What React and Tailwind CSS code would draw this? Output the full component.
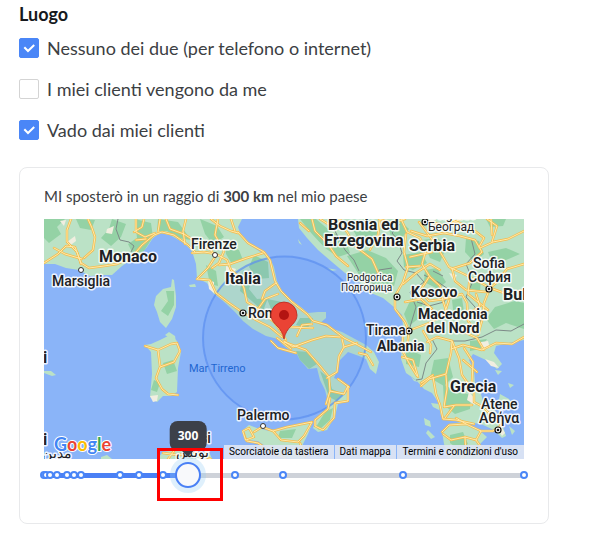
import React, { useState } from "react";

const stops = [0, 5, 12, 27, 48, 63, 77, 158, 198, 248, 398, 498, 748, 1000];

const land = [
  // France, Italy
  "M44 219 L242 219 L238 227 L241 236 L248 244 L259 251 L270 258 L274 267 L277 281 L283 293 L291 300 L301 307 L308 313 L318 312 L326 312 L326 318 L319 324 L330 328 L342 332 L355 339 L366 345 L374 352 L379 362 L376 374 L370 369 L366 359 L359 356 L348 352 L343 357 L338 362 L337 371 L334 378 L341 381 L349 388 L348 401 L338 404 L335 416 L327 430 L318 432 L313 428 L316 421 L325 411 L328 402 L325 390 L320 380 L317 368 L308 369 L300 360 L296 352 L288 349 L283 345 L278 339 L266 336 L253 329 L243 321 L235 312 L223 301 L213 293 L207 283 L197 278 L196 264 L192 251 L184 243 L170 235 L160 233 L153 238 L147 247 L139 256 L129 261 L122 266 L112 275 L104 275 L90 276 L79 270 L66 268 L55 264 L44 264 Z",
  // Balkans, Greece
  "M298 219 L524 219 L524 340 L509 343 L496 346 L494 353 L502 364 L497 369 L486 360 L473 354 L469 360 L474 370 L475 383 L481 394 L484 405 L494 409 L500 418 L506 436 L502 438 L494 430 L481 424 L467 422 L450 420 L441 416 L438 402 L432 393 L424 389 L416 380 L406 373 L401 359 L402 345 L403 326 L402 315 L394 307 L383 298 L371 293 L360 283 L345 273 L332 262 L318 250 L307 238 L299 228 Z",
  // Peloponnese
  "M442 431 L449 424 L463 422 L479 430 L487 437 L480 444 L484 453 L478 459 L448 459 L444 444 Z",
  // Corsica
  "M172 279 L174 280 L176 296 L176 307 L172 319 L166 328 L160 322 L157 312 L154 305 L156 296 L163 289 L171 287 Z",
  // Sardinia
  "M170 335 L177 341 L181 352 L178 368 L177 392 L171 396 L163 396 L157 402 L150 397 L152 374 L151 352 L145 345 L151 344 L160 340 Z",
  "M165 335 L169 332 L175 336 L176 342 L171 339 Z",
  // Sicily
  "M242 431 L249 425 L257 428 L269 431 L285 427 L313 421 L308 434 L302 446 L304 459 L288 458 L272 451 L258 441 L245 440 Z",
  // Tunisia
  "M157 459 L163 452 L174 450 L189 452 L201 454 L208 449 L212 459 Z",
  "M44 371 L51 371 L56 375 L52 376 L44 373 Z",
  "M101 457 L107 455 L112 459 L101 459 Z",
  // Aegean and Ionian islands
  "M500 394 L509 399 L516 409 L508 407 L499 400 Z",
  "M431 403 L439 404 L439 410 L433 407 Z",
  "M424 418 L430 421 L431 427 L425 425 Z",
  "M428 430 L435 437 L431 439 L426 433 Z",
  "M411 377 L418 382 L414 381 Z",
  "M495 370 L502 371 L498 375 Z",
  "M508 383 L514 385 L510 388 Z",
  "M509 426 L515 431 L512 435 Z",
  "M514 448 L521 450 L518 454 Z",
  "M189 285 L195 284 L196 287 L190 287 Z",
  "M298 239 L302 245 L299 243 Z",
  "M327 268 L337 270 L331 271 Z",
];

const forest = [
  "M44 219 L65 219 L57 227 L61 234 L49 243 L44 238 Z",
  "M76 219 L95 220 L91 230 L80 228 Z",
  "M112 219 L126 224 L121 237 L111 246 L101 238 L109 229 Z",
  "M135 219 L151 223 L153 237 L144 251 L133 254 L128 244 L137 238 Z",
  "M158 219 L178 222 L191 240 L178 238 L167 231 L157 231 Z",
  "M200 219 L217 226 L224 237 L213 244 L205 234 Z",
  "M225 244 L239 250 L243 260 L232 264 L226 254 Z",
  "M254 255 L268 262 L269 278 L257 279 L249 267 Z",
  "M243 270 L252 280 L249 289 L257 299 L268 298 L263 311 L253 302 L240 291 Z",
  "M206 265 L216 271 L218 286 L210 284 Z",
  "M267 299 L282 302 L292 311 L285 317 L272 311 Z",
  "M300 318 L313 318 L308 328 L296 325 Z",
  "M296 351 L308 352 L317 364 L309 369 L300 360 Z",
  "M320 371 L329 378 L332 389 L343 394 L337 401 L329 397 Z",
  "M325 412 L333 408 L330 420 L319 430 L316 427 Z",
  "M280 431 L296 429 L292 438 L278 438 Z",
  "M166 291 L174 291 L174 305 L168 316 L161 311 L168 301 Z",
  "M163 363 L173 360 L177 371 L167 374 Z",
  "M154 380 L160 383 L157 392 L151 390 Z",
  "M300 219 L316 219 L329 230 L345 239 L350 253 L338 257 L325 248 L312 234 Z",
  "M350 224 L370 220 L379 231 L370 244 L358 239 Z",
  "M347 256 L367 250 L386 258 L398 271 L394 286 L379 289 L362 279 Z",
  "M388 225 L398 219 L409 229 L401 239 L391 237 Z",
  "M403 255 L421 252 L427 263 L413 270 L404 267 Z",
  "M425 270 L437 268 L446 282 L438 289 L424 282 Z",
  "M410 301 L423 302 L419 318 L409 326 L404 314 Z",
  "M466 238 L479 241 L484 254 L474 262 L465 252 Z",
  "M486 219 L506 219 L503 226 L490 227 Z",
  "M495 307 L515 301 L524 303 L524 329 L506 323 L494 329 L486 319 Z",
  "M470 276 L481 279 L480 291 L468 288 Z",
  "M406 348 L421 355 L419 367 L406 364 Z",
  "M434 360 L448 358 L453 377 L444 386 L430 378 Z",
  "M443 384 L455 391 L471 395 L470 409 L455 414 L444 405 Z",
  "M450 435 L463 432 L468 444 L458 449 L450 443 Z",
  "M470 341 L487 339 L480 349 L470 351 Z",
  "M422 240 L438 238 L446 248 L440 262 L430 258 Z",
  "M452 300 L462 298 L464 312 L454 318 Z",
  "M488 252 L506 248 L520 254 L506 260 L492 262 Z",
];

const pale = [
  "M67 242 L75 236 L76 241 L68 247 Z",
  "M107 229 L114 226 L112 234 L106 233 Z",
  "M60 221 L66 220 L64 226 Z",
  "M226 266 L236 269 L232 277 L226 274 Z",
  "M208 280 L214 282 L214 293 L209 289 Z",
  "M150 396 L158 395 L157 401 L153 402 Z",
  "M449 273 L457 275 L454 281 Z",
  "M481 342 L488 341 L490 348 L481 349 Z",
  "M485 359 L494 362 L499 368 L491 366 Z",
  "M500 424 L505 433 L502 436 L497 428 Z",
  "M469 392 L475 399 L475 405 L467 400 Z",
  "M450 449 L455 453 L450 458 Z",
];

const roads = [
  "M44 263 L58 254 L66 246 L75 247 L81 263 L89 268 L104 266 L117 264 L131 258 L142 245 L154 235 L162 232 L174 235 L188 245 L195 252",
  "M71 219 L67 230 L67 242 L77 252 L81 264",
  "M88 219 L92 228 L95 237 L93 250 L84 258",
  "M54 248 L65 254 L82 259",
  "M136 219 L136 232 L145 237 L155 233 M160 219 L158 232 M144 219 L142 227 L134 232 M136 240 L146 239",
  "M166 219 L170 229 L184 234 L199 244 L211 250 L215 257 L208 268 L197 279",
  "M186 219 L183 231 L185 244",
  "M211 219 L220 226 L231 231 L238 233 M231 219 L235 231",
  "M218 219 L215 235 L224 251 L219 263 L212 268",
  "M192 253 L204 252 L216 254 L227 260 L231 270 L239 277 L244 288 L247 302 L260 310 L274 322 L282 333 L286 340",
  "M197 279 L210 280 L216 293 L229 303 L242 312 L258 321 L270 327 L282 337",
  "M238 232 L248 243 L264 252 L270 260 L275 281 L281 291 L292 302 L307 314 L313 321 L327 325 L344 338 L358 345 L371 352",
  "M219 265 L230 264 L247 258 L263 253",
  "M258 309 L265 299 L278 294 M276 283 L265 291 L262 299",
  "M284 341 L293 347 L312 340 L326 336 L340 337 M297 336 L302 325 L312 324 M290 327 L313 328",
  "M284 342 L306 350 L320 366 L329 377 L330 391 L326 404",
  "M327 378 L337 372 L339 356 L344 347 L357 343 M330 391 L344 394 L348 386 L348 401 L335 403 L334 418 L323 430 L315 426 L315 420 L328 409 L330 398",
  "M338 379 L349 387 M342 339 L344 347 M359 353 L367 355 L373 365",
  "M271 341 L278 348 L296 353 M277 338 L291 349",
  "M243 431 L249 428 L254 437 L246 440 Z M254 432 L262 427 L273 431 L287 427 L312 422 L304 436 L298 442 L281 440 L273 431",
  "M247 441 L258 443 L273 453 L285 458 M300 443 L305 457",
  "M145 346 L158 350 L171 344 L177 343 L180 351 L174 362 L160 367 L156 378 L162 389 L168 394 M158 350 L160 366 M168 394 L178 395",
  "M163 453 L178 455 L197 453 L211 459 M168 459 L174 451",
  "M312 219 L315 231 L328 244 L336 256 L348 266",
  "M320 219 L328 224 L341 219 M300 223 L309 231 M338 219 L347 232 L356 247 L372 259 L380 277",
  "M379 219 L392 223 L405 219 M380 220 L378 235 L370 250 M401 219 L407 232 L420 238 L426 250 L422 264 L430 277 L440 286",
  "M419 222 L431 238 L439 250 L449 267 L464 274 L481 283 L490 288",
  "M406 234 L404 252 L408 267 L403 282 L395 296 L395 309 L405 322 L409 331 L407 348",
  "M411 231 L427 236 L444 233 L460 236 L475 240 L482 252 L470 263 L451 269",
  "M424 220 L445 226 L461 219 M449 219 L470 227 L484 238 L479 247 M480 248 L493 242 L508 239 L524 231 M492 242 L497 226 L487 219",
  "M491 219 L492 235 M524 264 L507 269 L496 283 L490 288 L484 303 L483 317 L478 335 M490 288 L507 294 L524 290",
  "M403 284 L416 273 L430 264 L440 270 M429 277 L420 291 L429 301 L444 299 L462 294 L467 303 L468 321 L477 333",
  "M432 309 L421 299 L405 302 M452 268 L455 281 L466 290 L486 292 M440 286 L443 301 L448 316",
  "M449 300 L444 315 L429 323 L413 329 M476 294 L480 306 L464 317",
  "M470 275 L468 294 L488 310 M432 252 L410 257 M406 267 L420 266",
  "M403 335 L402 350 L409 363 L417 376 M402 357 L413 360 L418 377",
  "M423 331 L431 345 L430 353 M427 342 L437 337 L452 341 L451 353 L446 374 L429 379 L421 386",
  "M451 349 L463 345 L482 350 L496 343 L512 344 L524 337 M484 350 L477 338 L464 332 M452 341 L459 358 L462 375 L474 392 L474 402 L483 407 L500 424",
  "M421 383 L433 375 M446 375 L447 389 L444 407 L456 405 L472 405 M433 377 L436 394 L440 405 L443 419 L456 420 L474 424",
  "M442 432 L449 425 L466 424 L481 431 L476 440 L465 437 L451 440 L443 434 M465 437 L466 453 L461 459 M466 424 L456 418 M476 440 L483 450",
  "M480 431 L493 431 L502 425 M454 406 L445 418 M477 372 L463 360 M464 348 L473 362 L472 382",
];

const borders = [
  "M118 219 L116 229 L120 240 L129 242 L134 246 L131 252",
  "M322 220 L333 227 L337 235 L345 250 L354 260 L359 271",
  "M400 224 L392 233 L398 240 L402 253 L397 261 L404 270 L416 273 L424 282 L410 292 L416 307 L410 327",
  "M424 275 L438 282 L451 291 L444 302 L429 306 L417 302",
  "M392 268 L379 270 L372 281 L376 291 M433 271 L443 276 M471 238 L475 254 L466 264 L473 281 L466 297 L475 307 L481 323",
  "M524 324 L511 331 L496 330 L482 337 L465 341 L450 341 L442 338",
  "M432 339 L437 349 L426 363 L422 379 L416 380",
];

// [text, x, baseline, size, weight]
const labels = [
  ["Monaco", 99, 262, 16, 700],
  ["Marsiglia", 52, 286, 14, 500],
  ["Firenze", 191, 249, 14, 500],
  ["Italia", 225, 284, 16, 700],
  ["Rom", 248, 318, 14, 500],
  ["Palermo", 237, 420, 14, 500],
  ["Bosnia ed", 328, 230, 16, 700],
  ["Erzegovina", 324, 246, 16, 700],
  ["Serbia", 409, 251, 16, 700],
  ["Belgrado", 429, 219, 12, 400],
  ["Београд", 428, 231, 12, 400],
  ["Podgorica", 347, 281, 10, 400],
  ["Подгорица", 341, 291, 10, 400],
  ["Kosovo", 411, 297, 14, 700],
  ["Sofia", 473, 268, 14, 500],
  ["София", 468, 282, 14, 500],
  ["Bulgaria", 503, 300, 16, 700],
  ["Macedonia", 418, 319, 14, 700],
  ["del Nord", 426, 333, 14, 700],
  ["Tirana", 366, 335, 14, 500],
  ["Albania", 377, 351, 14, 700],
  ["Grecia", 450, 392, 16, 700],
  ["Atene", 481, 409, 14, 500],
  ["Αθήνα", 479, 423, 14, 500],
  ["i", 43, 363, 16, 700],
  ["i", 43, 445, 16, 700],
  ["مدين", 42, 458, 14, 500],
  ["Tunisi", 173, 443, 14, 500],
  ["تونس", 176, 457, 14, 500],
];

const towns = [
  [81, 270],
  [215, 255],
  [263, 426],
];

const capitals = [
  [243, 313],
  [425, 222],
  [397, 297],
  [489, 289],
  [409, 331],
  [498, 430],
  [187, 453],
];

const googleLetters = [
  ["G", "#4285f4"],
  ["o", "#ea4335"],
  ["o", "#fbbc05"],
  ["g", "#4285f4"],
  ["l", "#34a853"],
  ["e", "#ea4335"],
];

const Map = () => {
  return (
    <div className="relative">
      <svg viewBox="44 219 480 240" className="block w-full bg-[#8ab4f8]" role="img">
        <g fill="#bbe2c6">
          {land.map((d) => (
            <path key={d} d={d} />
          ))}
        </g>
        <g fill="#94d2a5">
          {forest.map((d) => (
            <path key={d} d={d} />
          ))}
        </g>
        <g fill="#f1eee0">
          {pale.map((d) => (
            <path key={d} d={d} />
          ))}
        </g>
        <g fill="none" stroke="#7d8a88" strokeWidth="1" strokeLinejoin="round">
          {borders.map((d) => (
            <path key={d} d={d} />
          ))}
        </g>

        <circle cx="284.5" cy="338" r="81.5" fill="#4a80f5" fillOpacity="0.12" stroke="#5b8ff0" strokeOpacity="0.7" strokeWidth="2" />

        <g fill="none" strokeLinejoin="round" strokeLinecap="round">
          <g stroke="#f3bd50" strokeWidth="2.4">
            {roads.map((d) => (
              <path key={d} d={d} />
            ))}
          </g>
          <g stroke="#ffe9a8" strokeWidth="1">
            {roads.map((d) => (
              <path key={d} d={d} />
            ))}
          </g>
        </g>

        {towns.map(([x, y]) => (
          <circle key={x} cx={x} cy={y} r="2.5" fill="#fff" stroke="#333" />
        ))}
        {capitals.map(([x, y]) => (
          <g key={x}>
            <circle cx={x} cy={y} r="3" fill="#fff" stroke="#111" strokeWidth="1.2" />
            <circle cx={x} cy={y} r="1.3" fill="#111" />
          </g>
        ))}

        <g
          className="font-['Roboto','Noto_Sans',sans-serif]"
          fill="#202124"
          stroke="#fff"
          strokeOpacity="0.85"
          strokeWidth="3"
          strokeLinejoin="round"
          paintOrder="stroke"
        >
          {labels.map(([text, x, y, size, weight]) => (
            <text key={text + y} x={x} y={y} fontSize={size} fontWeight={weight}>
              {text}
            </text>
          ))}
        </g>
        <text x="189" y="372" fontSize="11" fill="#1f66d0" className="font-['Roboto',sans-serif]">
          Mar Tirreno
        </text>
        <text
          x="54"
          y="451"
          fontSize="18"
          fontWeight="700"
          stroke="#fff"
          strokeWidth="2"
          paintOrder="stroke"
          className="font-['Lato',sans-serif]"
        >
          {googleLetters.map(([letter, color], i) => (
            <tspan key={i} fill={color}>
              {letter}
            </tspan>
          ))}
        </text>

        {/* Pin */}
        <path
          d="M284 339 C283 333 280 329 277 326 C273 322 271 319 271 315 A13 13 0 0 1 297 315 C297 319 295 322 291 326 C288 329 285 333 284 339 Z"
          fill="#ea4335"
          stroke="#b9281c"
          strokeWidth="0.8"
        />
        <circle cx="284" cy="315" r="5" fill="#b31412" />
      </svg>

      <div className="absolute right-0 bottom-0 flex gap-px font-['Roboto',sans-serif] text-[10px] leading-[14px] text-black">
        <button className="bg-[#dfe6f3]/90 px-[5px]">Scorciatoie da tastiera</button>
        <button className="bg-[#dfe6f3]/90 px-[5px]">Dati mappa</button>
        <a href="#termini" className="bg-[#dfe6f3]/90 px-[6px]">
          Termini e condizioni d'uso
        </a>
      </div>
    </div>
  );
};

const Checkbox = ({ label, checked, onChange }) => {
  return (
    <label className="flex h-5 cursor-pointer items-center gap-2">
      <span className="relative h-5 w-5 shrink-0">
        <input
          type="checkbox"
          checked={checked}
          onChange={onChange}
          className="block h-5 w-5 appearance-none rounded-[2px] border border-[#d4d4d4] bg-white checked:border-[#4a86f7] checked:bg-[#4a86f7]"
        />
        {checked && (
          <svg viewBox="0 0 20 20" className="pointer-events-none absolute inset-0" fill="none" stroke="#fff" strokeWidth="2">
            <path d="M5.3 9.2 L9 13 L15.2 7" />
          </svg>
        )}
      </span>
      <span>{label}</span>
    </label>
  );
};

const RadiusSlider = ({ value, onChange }) => {
  const percent = value / 10;

  return (
    <div className="relative h-8">
      <div className="absolute inset-x-0 top-[14px] h-[5px] bg-[#ced2d9]">
        <div className="h-full bg-[#4a80f5]" style={{ width: `${percent}%` }}></div>
      </div>
      {stops.map((stop) => (
        <span
          key={stop}
          className="absolute top-3 h-2 w-2 -translate-x-1/2 rounded-full border-2 border-[#4a86f7] bg-white"
          style={{ left: `${stop / 10}%` }}
        ></span>
      ))}
      <input
        type="range"
        min="0"
        max="1000"
        value={value}
        onChange={onChange}
        aria-label="Raggio in km"
        className="absolute -inset-x-[13px] top-0 h-8 cursor-pointer appearance-none bg-transparent outline-none [&::-webkit-slider-thumb]:h-[26px] [&::-webkit-slider-thumb]:w-[26px] [&::-webkit-slider-thumb]:appearance-none [&::-webkit-slider-thumb]:rounded-full [&::-webkit-slider-thumb]:border-2 [&::-webkit-slider-thumb]:border-[#4a80f5] [&::-webkit-slider-thumb]:bg-[#f8f9fb] [&::-webkit-slider-thumb]:shadow-[0_0_0_5px_rgba(150,205,245,0.3)]"
      />
      <div className="absolute bottom-10 -translate-x-1/2" style={{ left: `${percent}%` }}>
        <output className="block rounded-lg bg-[#3c4049] px-2 font-['Open_Sans',sans-serif] text-[12px] leading-[30px] font-bold text-white">
          {value}
        </output>
        <span className="absolute -bottom-1 left-1/2 h-2 w-2 -translate-x-1/2 rotate-45 bg-[#3c4049]"></span>
      </div>
      <div
        className="pointer-events-none absolute -top-[11px] h-[53px] w-[66px] -translate-x-1/2 border-3 border-[#ff0000]"
        style={{ left: `${percent + 0.4}%` }}
      ></div>
    </div>
  );
};

const App = () => {
  const [places, setPlaces] = useState({
    remote: true,
    atMine: false,
    travel: true,
  });
  const [radius, setRadius] = useState(300);

  const toggle = (name) => {
    setPlaces((prev) => ({ ...prev, [name]: !prev[name] }));
  };

  return (
    <main className="bg-white px-[19px] pt-0.5 font-['Lato',sans-serif] text-[18px] text-[#3c4043]">
      <fieldset>
        <legend className="mb-3 leading-6 font-bold text-[#16191d]">Luogo</legend>
        <div className="flex flex-col gap-[21px]">
          <Checkbox
            label="Nessuno dei due (per telefono o internet)"
            checked={places.remote}
            onChange={() => toggle("remote")}
          />
          <Checkbox
            label="I miei clienti vengono da me"
            checked={places.atMine}
            onChange={() => toggle("atMine")}
          />
          <Checkbox
            label="Vado dai miei clienti"
            checked={places.travel}
            onChange={() => toggle("travel")}
          />
        </div>
      </fieldset>

      {places.travel && (
        <section className="mt-[27px] max-w-[530px] rounded-lg border border-[#e8e9eb] px-6 pt-4 pb-8">
          <p className="mb-[11px] text-[15px] leading-6">
            MI sposterò in un raggio di <strong>{radius} km</strong> nel mio paese
          </p>
          <Map />
          <RadiusSlider value={radius} onChange={(e) => setRadius(Number(e.target.value))} />
        </section>
      )}
    </main>
  );
};

export default App;
